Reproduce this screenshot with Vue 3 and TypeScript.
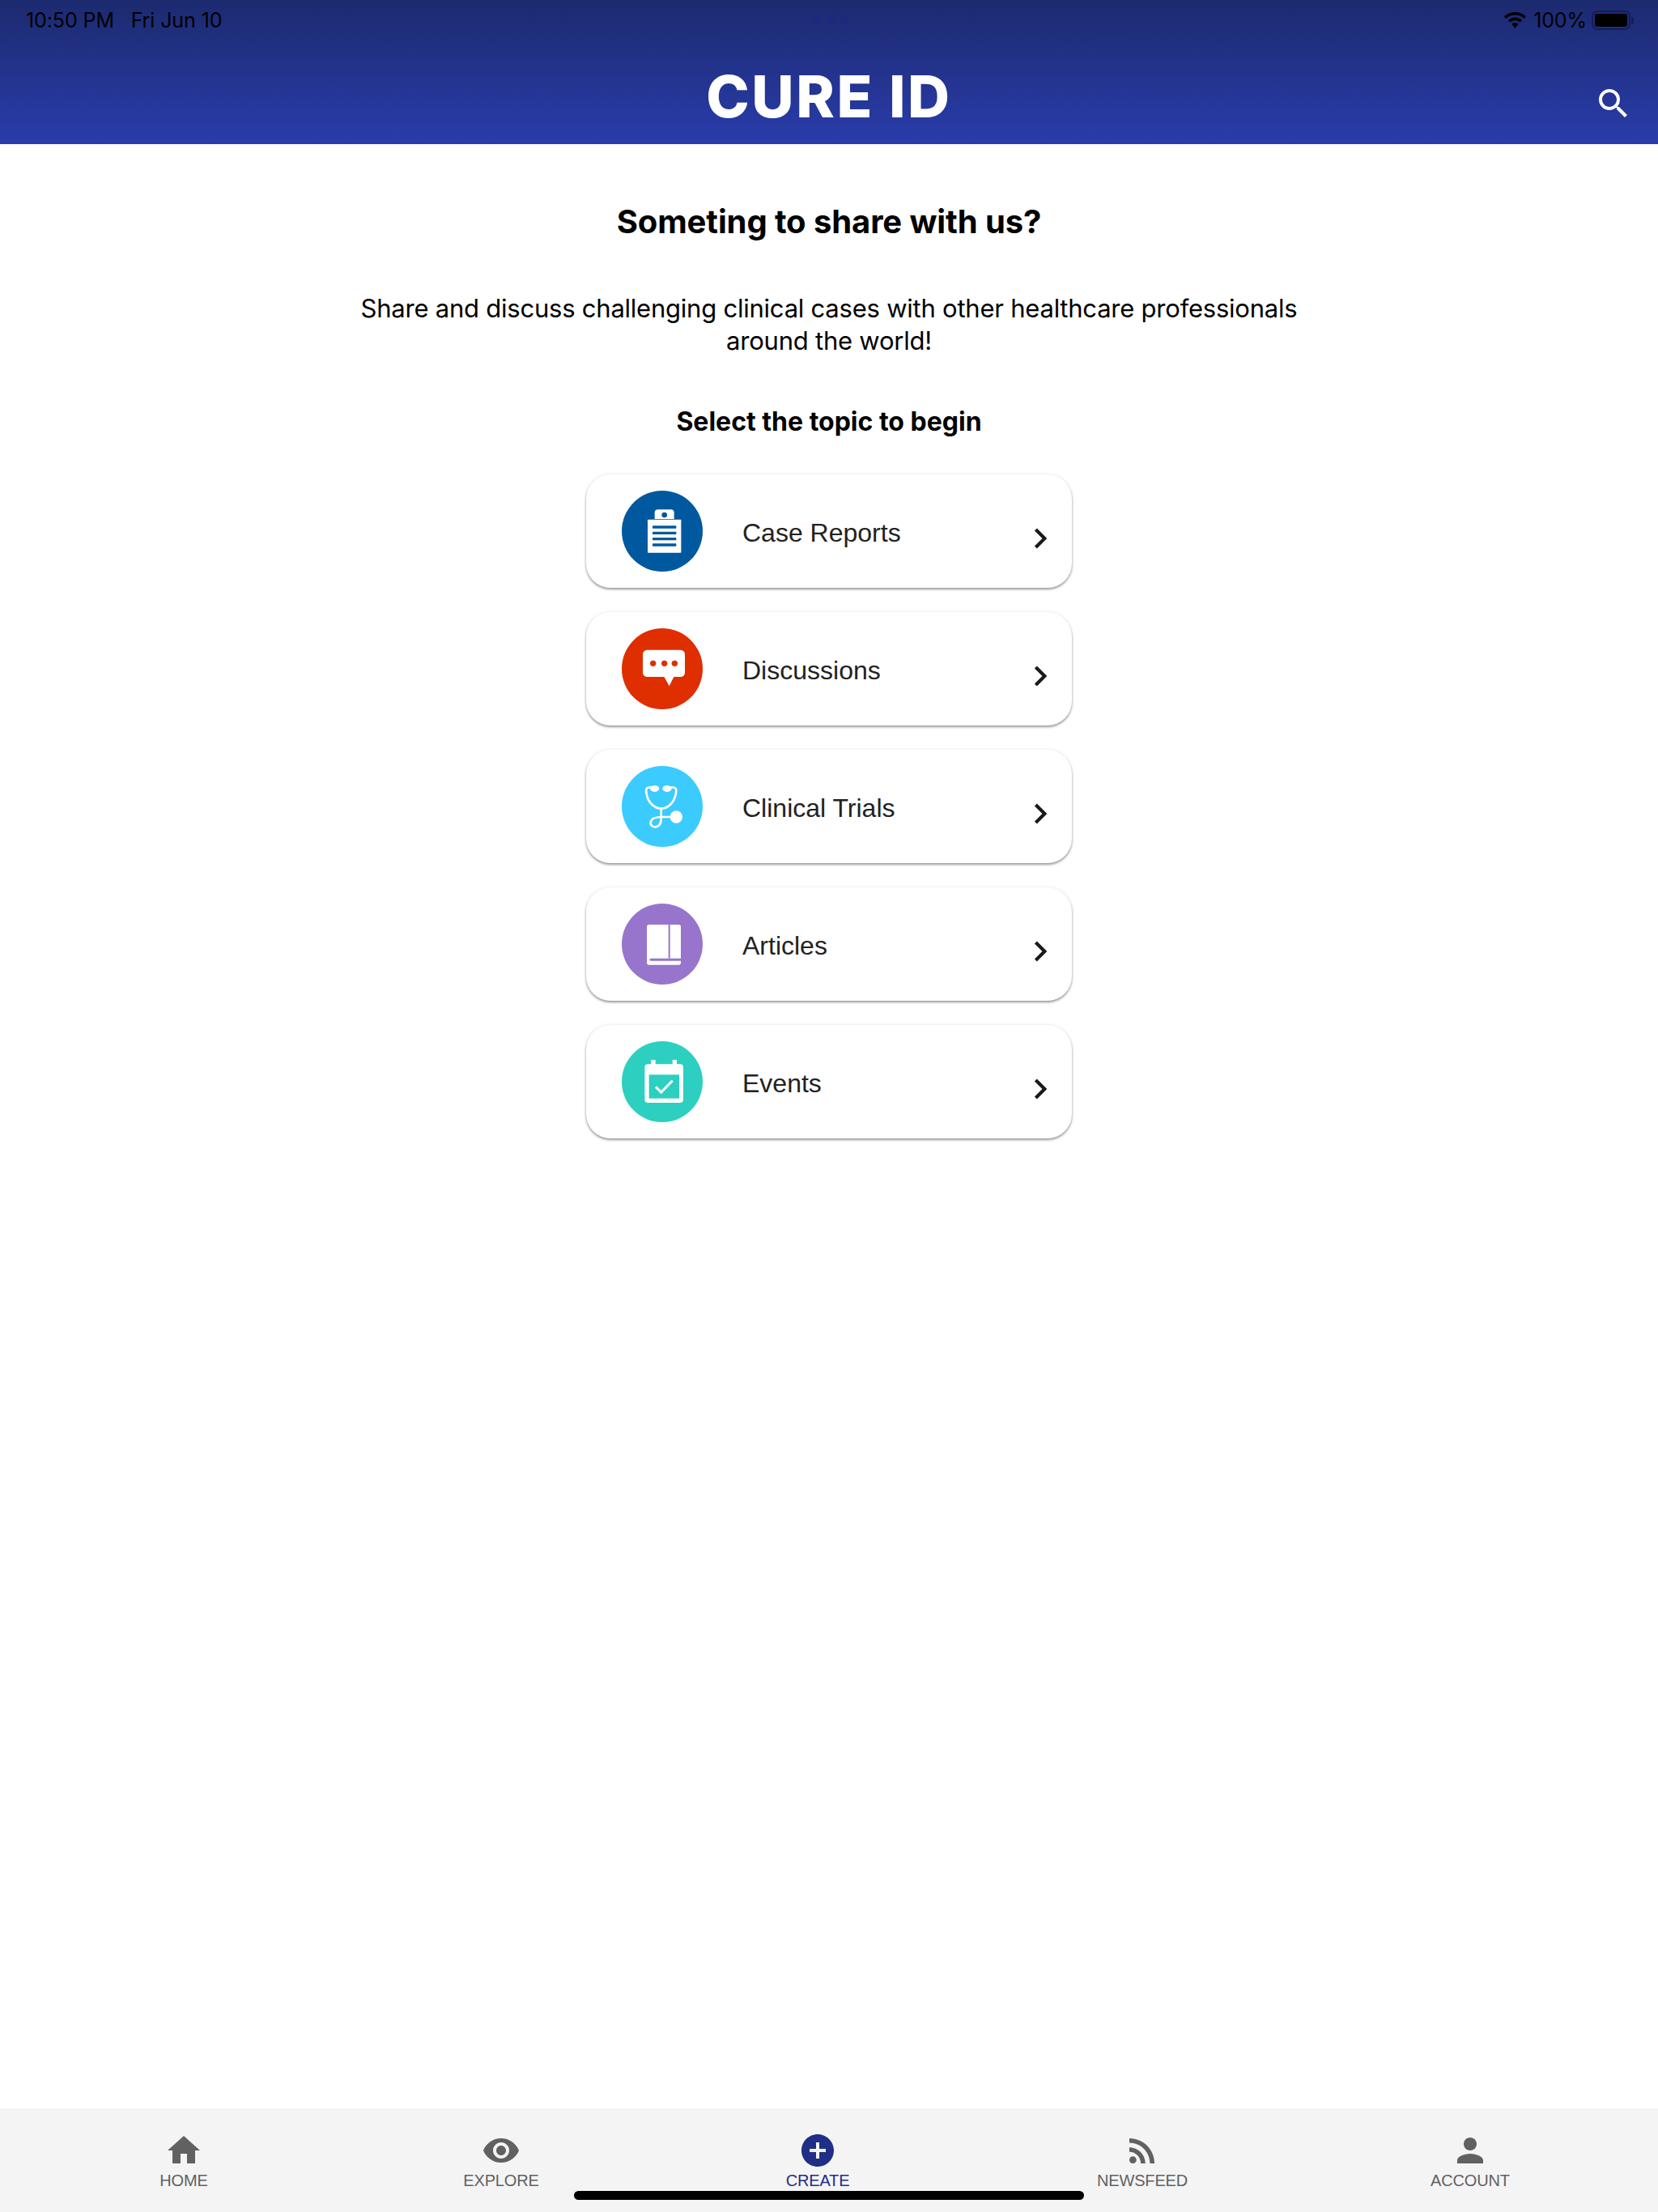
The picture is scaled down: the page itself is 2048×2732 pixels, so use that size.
<script setup lang="ts">
const topics = [
  { label: 'Case Reports', color: '#00589f', icon: 'report' },
  { label: 'Discussions', color: '#df2e00', icon: 'chat' },
  { label: 'Clinical Trials', color: '#3bcbff', icon: 'trial' },
  { label: 'Articles', color: '#9775cc', icon: 'book' },
  { label: 'Events', color: '#2ccfc0', icon: 'event' },
];

const tabs = [
  {
    label: 'HOME',
    d: 'M10 20v-6h4v6h5v-8h3L12 3 2 12h3v8z',
  },
  {
    label: 'EXPLORE',
    d: 'M12 4.5C7 4.5 2.73 7.61 1 12c1.73 4.39 6 7.5 11 7.5s9.27-3.11 11-7.5c-1.73-4.39-6-7.5-11-7.5zM12 17c-2.76 0-5-2.24-5-5s2.24-5 5-5 5 2.24 5 5-2.24 5-5 5zm0-8c-1.66 0-3 1.34-3 3s1.34 3 3 3 3-1.34 3-3-1.34-3-3-3z',
  },
  {
    label: 'CREATE',
    active: true,
    d: 'M12 2C6.48 2 2 6.48 2 12s4.48 10 10 10 10-4.48 10-10S17.52 2 12 2zm5 11h-4v4h-2v-4H7v-2h4V7h2v4h4v2z',
  },
  {
    label: 'NEWSFEED',
    d: 'M4 4.44v2.83c7.03 0 12.73 5.7 12.73 12.73h2.83c0-8.59-6.97-15.56-15.56-15.56zm0 5.66v2.83c3.9 0 7.07 3.17 7.07 7.07h2.83c0-5.47-4.43-9.9-9.9-9.9zM6.18 15.64a2.18 2.18 0 1 0 0 4.36 2.18 2.18 0 0 0 0-4.36z',
  },
  {
    label: 'ACCOUNT',
    d: 'M12 12c2.21 0 4-1.79 4-4s-1.79-4-4-4-4 1.79-4 4 1.79 4 4 4zm0 2c-2.67 0-8 1.34-8 4v2h16v-2c0-2.66-5.33-4-8-4z',
  },
];
</script>

<template>
  <div class="app">
    <header class="top">
      <div class="status">
        <span class="clock">10:50 PM&nbsp;&nbsp;&nbsp;Fri Jun 10</span>
        <div class="dots"><i></i><i></i><i></i></div>
        <div class="status-right">
          <svg class="wifi" viewBox="0 0 27 20">
            <path d="M13.500 0C8.300 0 3.600 2 0 5.300l2.400 2.600C5.300 5.200 9.200 3.600 13.500 3.600s8.200 1.600 11.100 4.300L27 5.300C23.400 2 18.700 0 13.500 0z" />
            <path d="M13.500 6.600c-3.300 0-6.300 1.300-8.600 3.400l2.400 2.600c1.600-1.500 3.800-2.400 6.200-2.400s4.600.9 6.200 2.400l2.400-2.600c-2.300-2.100-5.300-3.400-8.600-3.400z" />
            <path d="M13.500 13c-1.600 0-3 .6-4.100 1.600l4.100 5.400 4.100-5.400c-1.100-1-2.500-1.600-4.100-1.600z" />
          </svg>
          <span class="pct">100%</span>
          <div class="battery"><div class="charge"></div></div>
          <div class="battery-tip"></div>
        </div>
      </div>
      <div class="title-row">
        <span></span>
        <h1>CURE ID</h1>
        <svg class="search" viewBox="0 0 24 24">
          <path d="M15.500 14h-.79l-.28-.27A6.471 6.471 0 0 0 16 9.500 6.500 6.500 0 1 0 9.500 16c1.610 0 3.090-.59 4.230-1.570l.27.28v.79l5 4.990L20.490 19l-4.990-5zm-6 0C7.010 14 5 11.990 5 9.500S7.010 5 9.500 5 14 7.010 14 9.500 11.990 14 9.500 14z" />
        </svg>
      </div>
    </header>

    <main class="content">
      <h2>Someting to share with us?</h2>
      <p class="intro">
        Share and discuss challenging clinical cases with other healthcare professionals<br />around the world!
      </p>
      <h3>Select the topic to begin</h3>

      <div class="cards">
        <div v-for="t in topics" :key="t.label" class="card">
          <div class="badge" :style="{ background: t.color }">
            <svg v-if="t.icon === 'report'" viewBox="174 108 300 300">
              <path fill="#fff" d="M296 213v-23a12 12 0 0 1 12-12h48a12 12 0 0 1 12 12v23z" />
              <rect x="270" y="215" width="124" height="123" rx="2" fill="#fff" />
              <circle cx="332" cy="198" r="10" :fill="t.color" />
              <g :fill="t.color">
                <rect x="288" y="238" width="88" height="10" rx="2" />
                <rect x="288" y="260" width="88" height="10" rx="2" />
                <rect x="288" y="282" width="88" height="10" rx="2" />
                <rect x="288" y="304" width="88" height="10" rx="2" />
              </g>
            </svg>
            <svg v-else-if="t.icon === 'chat'" viewBox="174 618 300 300">
              <rect x="252" y="698" width="156" height="100" rx="16" fill="#fff" />
              <path fill="#fff" d="M330 796h38l-18 36z" />
              <g :fill="t.color">
                <circle cx="290" cy="748" r="11" />
                <circle cx="332" cy="748" r="11" />
                <circle cx="370" cy="748" r="11" />
              </g>
            </svg>
            <svg v-else-if="t.icon === 'trial'" viewBox="174 108 300 300">
              <g fill="none" stroke="#fff" stroke-width="8" stroke-linecap="round">
                <path d="M282 187c-18 0-20 6-16 26 6 32 30 53 54 53s48-21 54-53c4-20 2-26-16-26" />
                <path d="M320 266v40c0 18-10 28-22 28-13 0-20-10-16-21 4-13 22-16 43-16h36" />
              </g>
              <ellipse cx="296" cy="192" rx="17" ry="12" fill="#fff" />
              <ellipse cx="342" cy="192" rx="17" ry="12" fill="#fff" />
              <circle cx="376" cy="297" r="23" fill="#fff" />
            </svg>
            <svg v-else-if="t.icon === 'book'" viewBox="174 618 300 300">
              <rect x="267" y="696" width="126" height="149" rx="8" fill="#fff" />
              <rect x="347" y="696" width="6" height="125" :fill="t.color" />
              <path :fill="t.color" d="M282 821h111v9H282a4.500 4.500 0 0 1 0-9z" />
            </svg>
            <svg v-else viewBox="174 108 300 300">
              <rect x="259" y="193" width="143" height="143" rx="12" fill="#fff" />
              <rect x="283" y="177" width="16" height="24" fill="#fff" />
              <rect x="362" y="177" width="16" height="24" fill="#fff" />
              <rect x="275" y="232" width="112" height="88" :fill="t.color" />
              <path d="M300 277l20 20 42-43" fill="none" stroke="#fff" stroke-width="9" />
            </svg>
          </div>
          <span class="card-label">{{ t.label }}</span>
          <svg class="chevron" viewBox="0 0 24 24">
            <path d="M8.590 16.590L13.170 12 8.590 7.410 10 6l6 6-6 6z" />
          </svg>
        </div>
      </div>
    </main>

    <nav class="tabbar">
      <div v-for="tab in tabs" :key="tab.label" class="tab" :class="{ active: tab.active }">
        <svg viewBox="0 0 24 24"><path :d="tab.d" /></svg>
        <span>{{ tab.label }}</span>
      </div>
      <div class="home-indicator"></div>
    </nav>
  </div>
</template>

<style scoped>
.app {
  display: flex;
  flex-direction: column;
  min-height: 2732px;
  background: #fff;
  font-family: Inter, "Liberation Sans", sans-serif;
}

.top {
  height: 178px;
  box-sizing: border-box;
  background: linear-gradient(180deg, #1c2a6f 0%, #2a3cab 100%);
}

.status {
  position: relative;
  display: flex;
  justify-content: space-between;
  align-items: center;
  height: 50px;
  padding: 0 30px 0 32px;
  color: #000;
  font-size: 25px;
  letter-spacing: -0.1px;
}

.dots {
  position: absolute;
  left: 1004px;
  top: 20px;
  display: flex;
  gap: 8px;
}

.dots i {
  width: 9px;
  height: 10px;
  border-radius: 50%;
  background: #1a2a80;
}

.status-right {
  display: flex;
  align-items: center;
}

.wifi {
  width: 27px;
  height: 20px;
  margin-right: 9px;
}

.battery {
  box-sizing: border-box;
  width: 48px;
  height: 24px;
  margin-left: 6px;
  padding: 2px;
  border: 2px solid #141d52;
  border-radius: 7px;
}

.charge {
  height: 100%;
  background: #000;
  border-radius: 3px;
}

.battery-tip {
  width: 3px;
  height: 9px;
  margin-left: 1px;
  background: #141d52;
  border-radius: 0 2px 2px 0;
}

.title-row {
  display: grid;
  grid-template-columns: 1fr auto 1fr;
  padding: 0 31px;
}

h1 {
  margin: 29px 0 0;
  color: #fff;
  font-size: 72px;
  font-weight: 800;
  line-height: 80px;
  letter-spacing: 2.5px;
}

.search {
  justify-self: end;
  width: 48px;
  height: 48px;
  margin-top: 54px;
  fill: #fff;
}

.content {
  flex: 1;
  display: flex;
  flex-direction: column;
  align-items: center;
  color: #000;
  text-align: center;
}

h2 {
  margin: 72px 0 0;
  font-size: 40px;
  font-weight: 700;
  line-height: 48px;
  letter-spacing: -0.1px;
}

.intro {
  margin: 63px 0 0;
  font-size: 31px;
  line-height: 40px;
  letter-spacing: -0.23px;
}

h3 {
  margin: 60px 0 0;
  font-size: 32px;
  font-weight: 700;
  line-height: 40px;
}

.cards {
  display: flex;
  flex-direction: column;
  gap: 30px;
  margin-top: 45px;
}

.card {
  display: flex;
  align-items: center;
  box-sizing: border-box;
  width: 600px;
  height: 140px;
  padding-left: 44px;
  background: #fff;
  border-radius: 30px;
  box-shadow: 0 2px 3px rgba(0, 0, 0, 0.38), 0 0 5px rgba(0, 0, 0, 0.08);
}

.badge {
  flex: none;
  width: 100px;
  height: 100px;
  border-radius: 50%;
}

.badge svg {
  display: block;
  width: 100px;
  height: 100px;
}

.card-label {
  flex: 1;
  margin-left: 49px;
  padding-top: 4px;
  color: #222;
  font-family: "Liberation Sans", Arial, sans-serif;
  font-size: 32px;
  text-align: left;
}

.chevron {
  width: 50px;
  height: 50px;
  margin-top: 17px;
  margin-right: 14px;
  fill: #1a1a1a;
}

.tabbar {
  position: relative;
  display: grid;
  grid-template-columns: 392px 392px 390px 412px 398px;
  height: 128px;
  box-sizing: border-box;
  padding-left: 31px;
  padding-top: 28px;
  background: #f4f4f4;
}

.tab {
  display: flex;
  flex-direction: column;
  align-items: center;
  color: #616161;
  font-family: "Liberation Sans", Arial, sans-serif;
  font-size: 20px;
  line-height: 24px;
  letter-spacing: -0.15px;
}

.tab svg {
  width: 48px;
  height: 48px;
  margin-bottom: 1px;
  fill: #616161;
}

.tab.active {
  color: #1f2f87;
}

.tab.active svg {
  fill: #1f2f87;
}

.home-indicator {
  position: absolute;
  left: 709px;
  top: 102px;
  width: 630px;
  height: 11px;
  border-radius: 6px;
  background: #000;
}
</style>
